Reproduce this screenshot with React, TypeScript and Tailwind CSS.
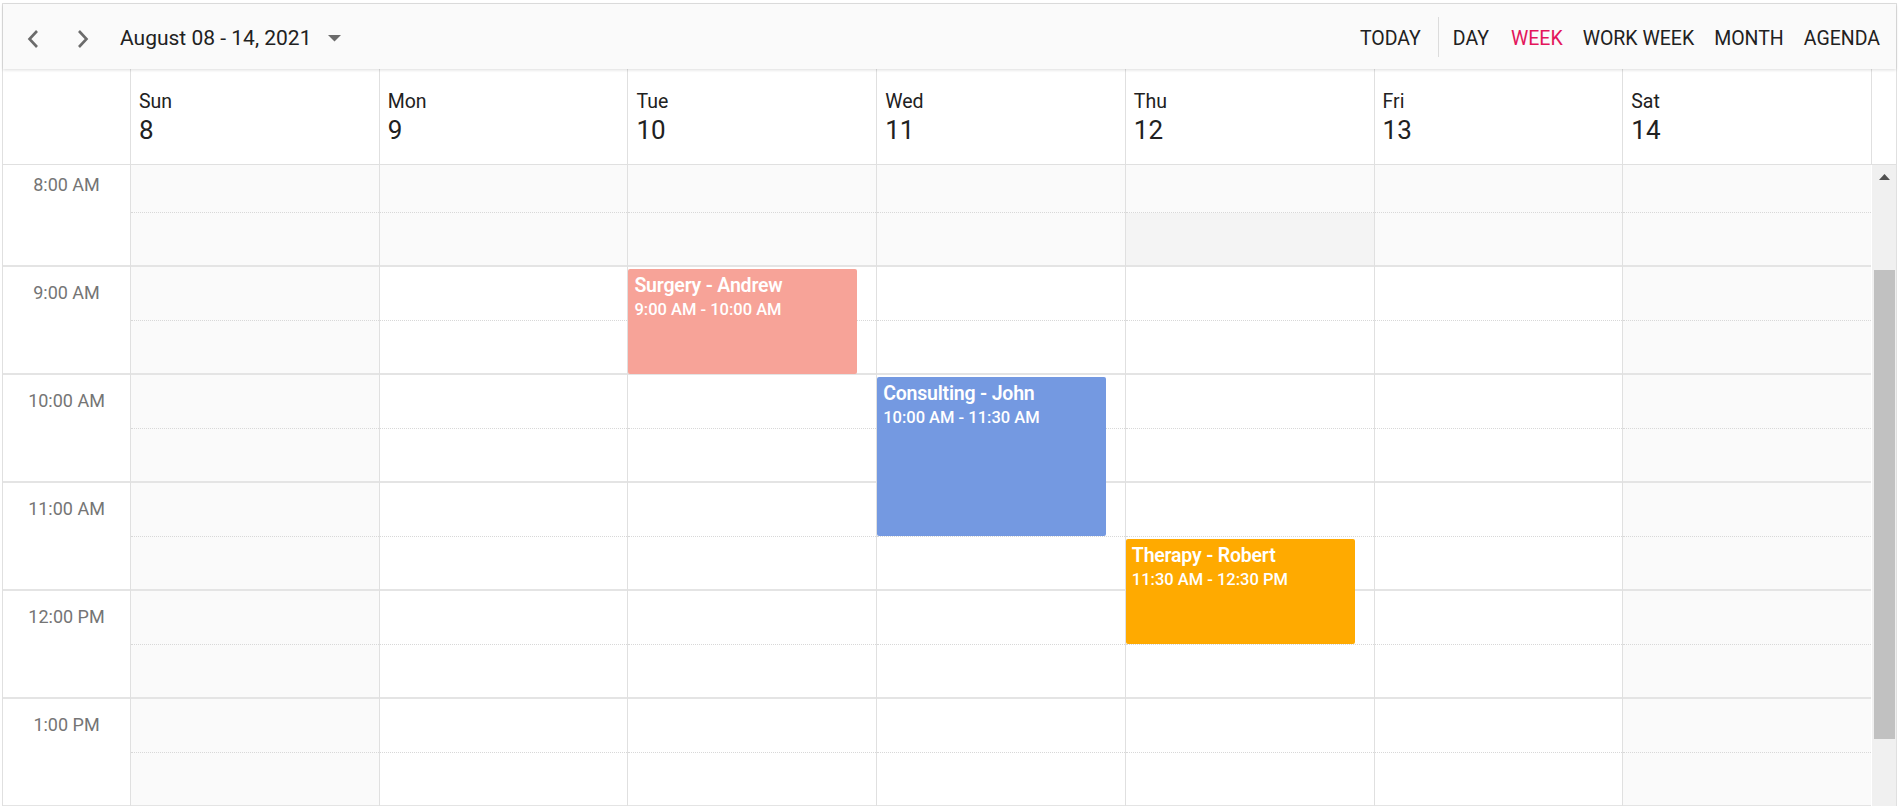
import React from 'react';

const days = [
  { name: 'Sun', date: 8 },
  { name: 'Mon', date: 9 },
  { name: 'Tue', date: 10 },
  { name: 'Wed', date: 11 },
  { name: 'Thu', date: 12 },
  { name: 'Fri', date: 13 },
  { name: 'Sat', date: 14 },
];

const hours = ['8:00 AM', '9:00 AM', '10:00 AM', '11:00 AM', '12:00 PM', '1:00 PM'];

const HOUR = 108;
const FIRST_HOUR = 8;

const events = [
  { day: 2, start: 9, end: 10, subject: 'Surgery - Andrew', time: '9:00 AM - 10:00 AM', color: 'bg-[#f7a398]' },
  { day: 3, start: 10, end: 11.5, subject: 'Consulting - John', time: '10:00 AM - 11:30 AM', color: 'bg-[#7499e1]' },
  { day: 4, start: 11.5, end: 12.5, subject: 'Therapy - Robert', time: '11:30 AM - 12:30 PM', color: 'bg-[#ffaa00]' },
];

const views = ['DAY', 'WEEK', 'WORK WEEK', 'MONTH', 'AGENDA'];

function slotBg(day: number, hourIdx: number, half: number) {
  if (day === 4 && hourIdx === 0 && half === 1) return 'bg-[#f4f4f4]';
  if (day === 0 || day === 6 || hourIdx === 0) return 'bg-[#fafafa]';
  return 'bg-white';
}

function Toolbar() {
  return (
    <div className="relative z-10 flex h-[65px] items-center justify-between bg-[#fafafa] pt-[4px] shadow-[0_1px_3px_rgba(0,0,0,0.14)]">
      <div className="flex items-center">
        <svg width="12" height="20" viewBox="0 0 12 20" className="ml-[24px]">
          <path d="M10 2 L2.5 10 L10 18" fill="none" stroke="#6b6b6b" strokeWidth="2.6" />
        </svg>
        <svg width="12" height="20" viewBox="0 0 12 20" className="ml-[38px]">
          <path d="M2 2 L9.5 10 L2 18" fill="none" stroke="#6b6b6b" strokeWidth="2.6" />
        </svg>
        <span className="ml-[31px] text-[21px] text-[#212121]">August 08 - 14, 2021</span>
        <svg width="13" height="7" viewBox="0 0 13 7" className="ml-[17px]">
          <path d="M0 0 L13 0 L6.5 6.5 Z" fill="#6b6b6b" />
        </svg>
      </div>
      <div className="flex items-center pr-[6px] text-[19.5px] text-[#212121]">
        <span className="px-[10px]">TODAY</span>
        <span className="ml-[7px] mr-[4px] h-[40px] w-px -translate-y-[2px] bg-[#dcdcdc]" />
        {views.map((v) => (
          <span
            key={v}
            className={`${v === 'DAY' ? 'pl-[10px] pr-[12px]' : 'px-[10px]'} ${v === 'WEEK' ? 'text-[#e3165b]' : ''}`}
          >
            {v}
          </span>
        ))}
      </div>
    </div>
  );
}

function DateHeader() {
  return (
    <div className="grid h-[96px] grid-cols-[127px_repeat(7,1fr)_25px] border-b border-[#e0e0e0] bg-white">
      <div />
      {days.map((d) => (
        <div key={d.name} className="border-l border-[#e0e0e0] pl-[8px] pt-[21px] text-[#212121]">
          <div className="text-[19.5px] leading-[24px]">{d.name}</div>
          <div className="text-[26px] leading-[32px]">{d.date}</div>
        </div>
      ))}
      <div className="border-l border-[#e0e0e0]" />
    </div>
  );
}

function Scrollbar() {
  return (
    <div className="flex w-[25px] flex-col items-center border-l border-white bg-[#f0f0f0] pt-[9px]">
      <svg width="11" height="6" viewBox="0 0 11 6">
        <path d="M0 6 L5.5 0 L11 6 Z" fill="#505050" />
      </svg>
      <div className="mt-[90px] h-[469px] w-[21px] bg-[#c1c1c1]" />
    </div>
  );
}

function WeekGrid() {
  return (
    <div className="flex h-[642px] overflow-hidden">
      <div className="flex-1 overflow-hidden">
        <div className="-mt-[6px] grid grid-cols-[127px_repeat(7,1fr)]">
          <div className="flex flex-col">
            {hours.map((h) => (
              <div key={h} className="h-[108px] border-b-2 border-[#e4e4e4] pt-[15px] text-center text-[18px] leading-[22px] text-[#757575]">
                {h}
              </div>
            ))}
          </div>
          {days.map((d, di) => (
            <div key={d.name} className="relative flex flex-col border-l border-[#e0e0e0]">
              {hours.map((h, hi) => (
                <div key={h} className="flex flex-col">
                  <div className={`h-[54px] border-b border-dotted border-[#d8d8d8] ${slotBg(di, hi, 0)}`} />
                  <div className={`h-[54px] border-b-2 border-[#e4e4e4] ${slotBg(di, hi, 1)}`} />
                </div>
              ))}
              {events
                .filter((e) => e.day === di)
                .map((e) => (
                  <div
                    key={e.subject}
                    className={`absolute left-0 right-[19px] rounded-[2px] px-[6px] pt-[5px] text-white ${e.color}`}
                    style={{ top: (e.start - FIRST_HOUR) * HOUR + 2, height: (e.end - e.start) * HOUR - 3 }}
                  >
                    <div className="text-[19.5px] font-semibold leading-[24px] tracking-[-0.2px]">{e.subject}</div>
                    <div className="mt-[1px] text-[16.5px] font-medium leading-[22px]">{e.time}</div>
                  </div>
                ))}
            </div>
          ))}
        </div>
      </div>
      <Scrollbar />
    </div>
  );
}

export default function App() {
  return (
    <div className="h-[806px] w-[1901px] overflow-hidden bg-white font-['Roboto',sans-serif]">
      <div className="ml-[2px] mt-[3px] w-[1895px] border border-[#e0e0e0]">
        <Toolbar />
        <DateHeader />
        <WeekGrid />
      </div>
    </div>
  );
}
